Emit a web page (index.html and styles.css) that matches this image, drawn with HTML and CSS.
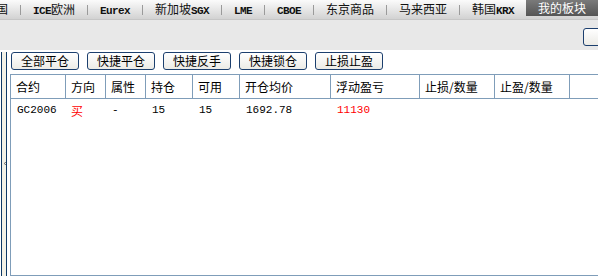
FILE: index.html
```html
<!DOCTYPE html>
<html lang="zh-CN">
<head>
  <meta charset="UTF-8" />
  <title>我的板块</title>
  <link rel="stylesheet" href="styles.css">
</head>
<body>

  <div class="tabs">
    <span class="tab first">国</span><i class="sep"></i>
    <span class="tab"><b>ICE</b>欧洲</span><i class="sep"></i>
    <span class="tab"><b>Eurex</b></span><i class="sep"></i>
    <span class="tab">新加坡<b>SGX</b></span><i class="sep"></i>
    <span class="tab"><b>LME</b></span><i class="sep"></i>
    <span class="tab"><b>CBOE</b></span><i class="sep"></i>
    <span class="tab">东京商品</span><i class="sep"></i>
    <span class="tab">马来西亚</span><i class="sep"></i>
    <span class="tab">韩国<b>KRX</b></span>
    <span class="tab active">我的板块</span>
  </div>

  <div class="bar">
    <button class="mini"></button>
  </div>

  <div class="main">
    <div class="side">
      <svg width="4" height="7" viewBox="0 0 4 7"><path d="M3.5 0.5 L0.8 3.5 L3.5 6.5" fill="none" stroke="#111" stroke-width="1.3"/></svg>
    </div>

    <div class="content">
      <div class="actions">
        <button>全部平仓</button>
        <button>快捷平仓</button>
        <button>快捷反手</button>
        <button>快捷锁仓</button>
        <button>止损止盈</button>
      </div>

      <div class="grid">
        <div class="row head">
          <div class="cell w1">合约</div>
          <div class="cell w2">方向</div>
          <div class="cell w3">属性</div>
          <div class="cell w4">持仓</div>
          <div class="cell w5">可用</div>
          <div class="cell w6">开仓均价</div>
          <div class="cell w7">浮动盈亏</div>
          <div class="cell w8">止损/数量</div>
          <div class="cell w9">止盈/数量</div>
          <div class="cell rest"></div>
        </div>
        <div class="row">
          <div class="cell w1 num">GC2006</div>
          <div class="cell w2 red">买</div>
          <div class="cell w3 num">-</div>
          <div class="cell w4 num">15</div>
          <div class="cell w5 num">15</div>
          <div class="cell w6 num">1692.78</div>
          <div class="cell w7 num red">11130</div>
          <div class="cell w8"></div>
          <div class="cell w9"></div>
        </div>
      </div>
    </div>
  </div>

</body>
</html>
```

FILE: styles.css
```css
body {
  margin: 0;
  font-family: "Noto Sans CJK SC", sans-serif;
  font-size: 12px;
  color: #000;
  background: #fff;
  overflow: hidden;
}

/* top market tabs */
.tabs {
  height: 20px;
  display: flex;
  gap: 12px;
  background: linear-gradient(#fbfbfb, #d2d2d2);
  border-bottom: 1px solid #c6c6c6;
  box-sizing: border-box;
  white-space: nowrap;
}

.tab {
  line-height: 18px;
  color: #111;
}

.tab.first {
  margin-left: -4px;
}

.tab b {
  font-family: "Liberation Mono", monospace;
  font-size: 11px;
  letter-spacing: -0.6px;
}

.sep {
  width: 1px;
  height: 10px;
  align-self: center;
  background: #9a9a9a;
}

.tab.active {
  width: 73px;
  height: 16px;
  line-height: 16px;
  text-align: center;
  color: #fff;
  background: linear-gradient(#7a7a7a, #555);
}

/* gray strip */
.bar {
  height: 30px;
  background: #e8e8e8;
  display: flex;
  justify-content: flex-end;
  align-items: flex-start;
  padding-top: 8px;
  box-sizing: border-box;
}

.mini {
  width: 22px;
  height: 18px;
  margin-right: -7px;
  border: 1px solid #1c3f6e;
  border-radius: 3px;
  background: linear-gradient(#fff, #ecebe6);
  padding: 0;
}

/* main area */
.main {
  display: flex;
  height: 226px;
}

.side {
  width: 6px;
  margin: 2px 0 0 1px;
  border-left: 1px solid #0e3865;
  border-right: 1px solid #0e3865;
  background: #f3f1e6;
  box-sizing: border-box;
  display: flex;
  align-items: center;
  justify-content: center;
  padding-bottom: 2px;
}

.side svg {
  margin-left: 2px;
}

.content {
  flex: 1;
  margin-left: 3px;
  padding-top: 2px;
  min-width: 0;
}

.actions {
  display: flex;
  gap: 8px;
  margin-left: 1px;
  height: 18px;
}

.actions button {
  width: 68px;
  height: 18px;
  padding: 0;
  font-family: inherit;
  font-size: 12px;
  line-height: 14px;
  color: #000;
  border: 1px solid #1c3f6e;
  border-radius: 3px;
  background: linear-gradient(#fff, #ecebe6);
}

.grid {
  margin-top: 4px;
  height: 202px;
  border-top: 1px solid #7f9db9;
  border-left: 1px solid #7f9db9;
  border-bottom: 1px solid #7f9db9;
  box-sizing: border-box;
}

.row {
  display: flex;
  height: 24px;
}

.row.head {
  height: 24px;
  border-bottom: 1px solid #7f9db9;
  box-sizing: border-box;
}

.cell {
  box-sizing: border-box;
  padding-left: 5px;
  line-height: 23px;
  white-space: nowrap;
}

.head .cell {
  border-right: 1px solid #7f9db9;
}

.head .cell.rest {
  border-right: none;
  flex: 1;
}

.w1 { width: 55px; }
.w2 { width: 40px; }
.w3 { width: 40px; }
.w4 { width: 47px; }
.w5 { width: 47px; }
.w6 { width: 91px; }
.w7 { width: 89px; }
.w8 { width: 75px; }
.w9 { width: 75px; }

.num {
  font-family: "Liberation Mono", monospace;
  font-size: 11px;
  padding-left: 6px;
}

.red {
  color: #f00;
}
```
